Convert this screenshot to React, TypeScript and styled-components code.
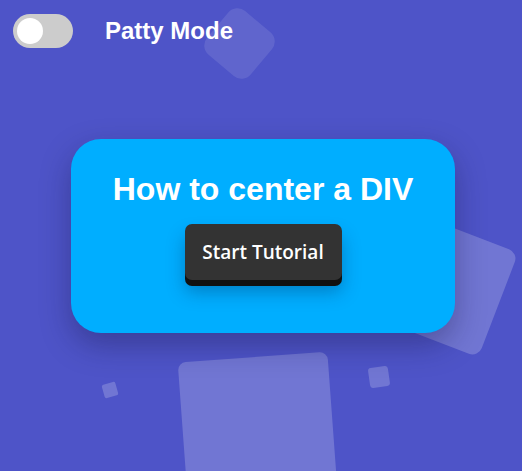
import React, { useState } from "react";
import styled, { createGlobalStyle } from "styled-components";

const GlobalStyle = createGlobalStyle`
  html, body { margin: 0; padding: 0; }
  body {
    background: #4e54c8;
    font-family: "Liberation Sans", Arial, sans-serif;
    overflow: hidden;
  }
`;

const Page = styled.div`
  position: relative;
  box-sizing: border-box;
  width: 100vw;
  height: 100vh;
  padding: 14px 9px 14px 13px;
  display: grid;
  grid-template-areas: "stack";
  overflow: hidden;
`;

const Backdrop = styled.div`
  position: absolute;
  inset: 0;
  pointer-events: none;
`;

const Square = styled.span<{ $size: number; $x: number; $y: number; $rot: number; $radius: number; $alpha: number }>`
  position: absolute;
  left: ${(p) => p.$x - p.$size / 2}px;
  top: ${(p) => p.$y - p.$size / 2}px;
  width: ${(p) => p.$size}px;
  height: ${(p) => p.$size}px;
  border-radius: ${(p) => p.$radius}px;
  background: rgba(255, 255, 255, ${(p) => p.$alpha});
  transform: rotate(${(p) => p.$rot}deg);
`;

const Header = styled.header`
  grid-area: stack;
  align-self: start;
  justify-self: start;
  display: flex;
  align-items: center;
  gap: 32px;
  z-index: 2;
`;

const Toggle = styled.button<{ $on: boolean }>`
  position: relative;
  width: 60px;
  height: 34px;
  border: none;
  padding: 4px;
  border-radius: 17px;
  background: ${(p) => (p.$on ? "#2196f3" : "#cccccc")};
  display: flex;
  justify-content: ${(p) => (p.$on ? "flex-end" : "flex-start")};
  cursor: pointer;
`;

const Knob = styled.span`
  width: 26px;
  height: 26px;
  border-radius: 50%;
  background: #ffffff;
`;

const Label = styled.span`
  color: #ffffff;
  font-size: 24px;
  font-weight: 700;
`;

const Card = styled.main`
  grid-area: stack;
  align-self: center;
  justify-self: center;
  position: relative;
  z-index: 1;
  box-sizing: border-box;
  width: 384px;
  height: 194px;
  padding: 32px 0 0;
  border-radius: 30px;
  background: #00aeff;
  box-shadow: 0 12px 30px rgba(20, 20, 60, 0.35);
  display: flex;
  flex-direction: column;
  align-items: center;
  gap: 16px;
`;

const Title = styled.h1`
  margin: 0;
  color: #ffffff;
  font-size: 32px;
  font-weight: 700;
  line-height: normal;
`;

const StartButton = styled.button`
  box-sizing: border-box;
  width: 157px;
  height: 56px;
  border: none;
  border-radius: 7px;
  background: #333333;
  color: #ffffff;
  font-family: "Open Sans", sans-serif;
  font-weight: 600;
  font-size: 19px;
  letter-spacing: 0;
  box-shadow: 0 6px 0 #111111, 0 12px 18px rgba(0, 40, 90, 0.35);
  cursor: pointer;
`;

export default function App() {
  const [on, setOn] = useState(false);
  return (
    <>
      <GlobalStyle />
      <Page>
        <Backdrop>
          <Square $size={57} $x={239} $y={43} $rot={40} $radius={12} $alpha={0.1} />
          <Square $size={112} $x={446} $y={285} $rot={21} $radius={10} $alpha={0.2} />
          <Square $size={150} $x={258} $y={432} $rot={-4.2} $radius={8} $alpha={0.2} />
          <Square $size={14} $x={110} $y={390} $rot={-16} $radius={2} $alpha={0.2} />
          <Square $size={20} $x={379} $y={377} $rot={-8} $radius={3} $alpha={0.2} />
        </Backdrop>
        <Header>
          <Toggle $on={on} onClick={() => setOn(!on)} aria-label="Patty Mode">
            <Knob />
          </Toggle>
          <Label>Patty Mode</Label>
        </Header>
        <Card>
          <Title>How to center a DIV</Title>
          <StartButton>Start Tutorial</StartButton>
        </Card>
      </Page>
    </>
  );
}
